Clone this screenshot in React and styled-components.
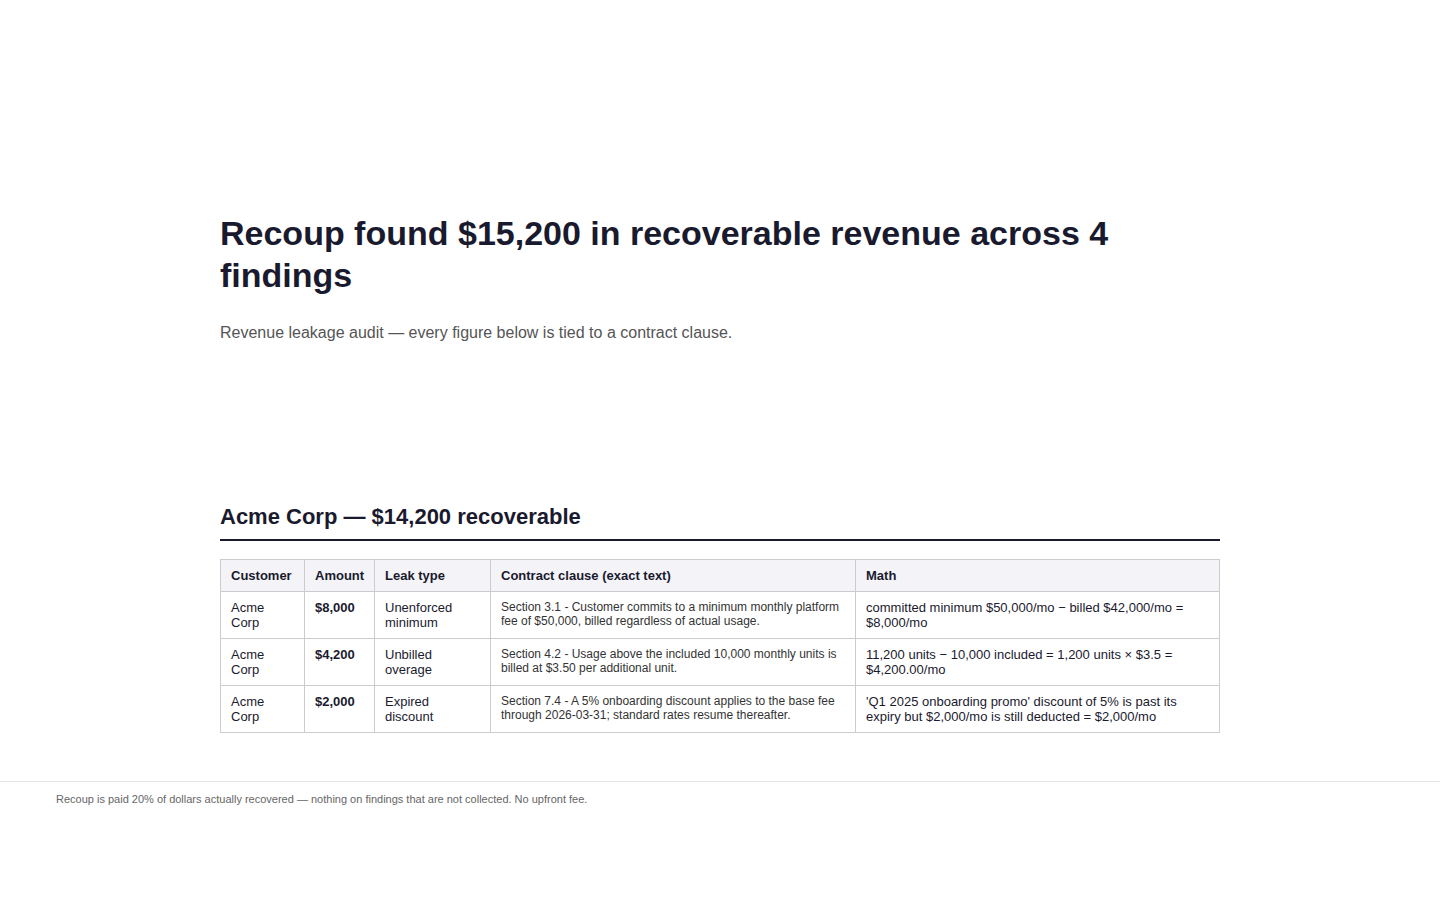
import React from "react";
import styled, { createGlobalStyle } from "styled-components";

const GlobalStyle = createGlobalStyle`
  html, body {
    margin: 0;
    padding: 0;
    background: #ffffff;
    font-family: "Liberation Sans", Arial, Helvetica, sans-serif;
    color: #1a1a2e;
  }
`;

const Page = styled.div`
  display: flex;
  flex-direction: column;
`;

const Main = styled.main`
  width: 1000px;
  margin: 0 auto;
`;

const Hero = styled.section`
  padding: 212px 0 0;
`;

const Title = styled.h1`
  margin: 0 0 25px;
  font-size: 34px;
  line-height: 42px;
  font-weight: 700;
  color: #1a1a2e;
`;

const Subtitle = styled.p`
  margin: 0;
  font-size: 16px;
  line-height: 24px;
  color: #555555;
`;

const Section = styled.section`
  padding: 158px 0 48px;
`;

const SectionTitle = styled.h2`
  margin: 0 0 18px;
  padding-bottom: 8px;
  font-size: 22px;
  line-height: 28px;
  font-weight: 700;
  color: #1a1a2e;
  border-bottom: 2px solid #1a1a2e;
`;

const Table = styled.table`
  width: 999px;
  border-collapse: collapse;
  table-layout: fixed;
  font-size: 13px;
  line-height: 15px;
`;

const Th = styled.th`
  text-align: left;
  vertical-align: top;
  padding: 8px 10px;
  font-weight: 700;
  background: #f4f4f8;
  border: 1px solid #cccccc;
  color: #1a1a2e;
`;

const Td = styled.td`
  vertical-align: top;
  padding: 8px 10px;
  border: 1px solid #cccccc;
  color: ${(p) => (p.$muted ? "#333333" : "#1a1a2e")};
  font-size: ${(p) => (p.$small ? "12px" : "13px")};
  line-height: ${(p) => (p.$small ? "14px" : "15px")};
  font-weight: ${(p) => (p.$bold ? 700 : 400)};
`;

const Footer = styled.footer`
  border-top: 1px solid #e5e5e5;
  padding: 10px 56px 12px;
  font-size: 11px;
  line-height: 14px;
  color: #666666;
`;

const findings = [
  {
    customer: "Acme Corp",
    amount: "$8,000",
    type: "Unenforced minimum",
    clause:
      "Section 3.1 - Customer commits to a minimum monthly platform fee of $50,000, billed regardless of actual usage.",
    math: "committed minimum $50,000/mo − billed $42,000/mo = $8,000/mo",
  },
  {
    customer: "Acme Corp",
    amount: "$4,200",
    type: "Unbilled overage",
    clause:
      "Section 4.2 - Usage above the included 10,000 monthly units is billed at $3.50 per additional unit.",
    math: "11,200 units − 10,000 included = 1,200 units × $3.5 = $4,200.00/mo",
  },
  {
    customer: "Acme Corp",
    amount: "$2,000",
    type: "Expired discount",
    clause:
      "Section 7.4 - A 5% onboarding discount applies to the base fee through 2026-03-31; standard rates resume thereafter.",
    math: "'Q1 2025 onboarding promo' discount of 5% is past its expiry but $2,000/mo is still deducted = $2,000/mo",
  },
];

const App = () => {
  return (
    <Page>
      <GlobalStyle />
      <Main>
        <Hero>
          <Title>Recoup found $15,200 in recoverable revenue across 4 findings</Title>
          <Subtitle>
            Revenue leakage audit — every figure below is tied to a contract clause.
          </Subtitle>
        </Hero>

        <Section>
          <SectionTitle>Acme Corp — $14,200 recoverable</SectionTitle>
          <Table>
            <colgroup>
              <col style={{ width: 84 }} />
              <col style={{ width: 70 }} />
              <col style={{ width: 116 }} />
              <col style={{ width: 365 }} />
              <col style={{ width: 364 }} />
            </colgroup>
            <thead>
              <tr>
                <Th>Customer</Th>
                <Th>Amount</Th>
                <Th>Leak type</Th>
                <Th>Contract clause (exact text)</Th>
                <Th>Math</Th>
              </tr>
            </thead>
            <tbody>
              {findings.map((f, index) => (
                <tr key={index}>
                  <Td>{f.customer}</Td>
                  <Td $bold>{f.amount}</Td>
                  <Td>{f.type}</Td>
                  <Td $small $muted>{f.clause}</Td>
                  <Td>{f.math}</Td>
                </tr>
              ))}
            </tbody>
          </Table>
        </Section>
      </Main>
      <Footer>
        Recoup is paid 20% of dollars actually recovered — nothing on findings that are not
        collected. No upfront fee.
      </Footer>
    </Page>
  );
};

export default App;
